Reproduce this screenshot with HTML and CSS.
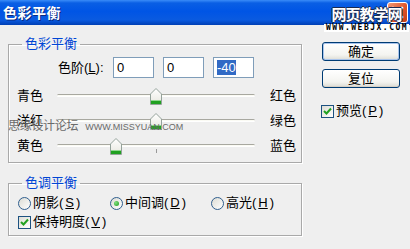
FILE: index.html
```html
<!DOCTYPE html>
<html lang="zh">
<head>
    <meta charset="UTF-8">
    <title>色彩平衡</title>
    <link rel="stylesheet" href="styles.css">
</head>
<body>
    <div class="titlebar">
        <span class="title">色彩平衡</span>
        <span class="close">
            <svg width="13" height="13" viewBox="0 0 13 13"><path d="M2 2 L11 11 M11 2 L2 11" stroke="#fff" stroke-width="2.4" stroke-linecap="square"/></svg>
        </span>
    </div>
    <div class="site-mark">
        <span class="site-name">网页教学网</span>
        <span class="site-url">WWW.WEBJX.COM</span>
    </div>

    <div class="main">
        <div class="left">
            <fieldset class="group">
                <legend>色彩平衡</legend>
                <div class="levels">
                    <span class="levels-label">色阶(<u>L</u>):</span>
                    <div class="field">0</div>
                    <div class="field">0</div>
                    <div class="field"><span class="selected">-40</span></div>
                </div>
                <div class="slider-row">
                    <span>青色</span>
                    <div class="track"><i class="tick"></i><span class="thumb" style="left: 99px"></span></div>
                    <span class="end">红色</span>
                </div>
                <div class="slider-row">
                    <span>洋红</span>
                    <div class="track"><i class="tick"></i><span class="thumb" style="left: 99px"></span></div>
                    <span class="end">绿色</span>
                </div>
                <div class="slider-row">
                    <span>黄色</span>
                    <div class="track"><i class="tick"></i><span class="thumb" style="left: 59px"></span></div>
                    <span class="end">蓝色</span>
                </div>
                <div class="forum-mark">思缘设计论坛 <small>WWW.MISSYUAN.COM</small></div>
            </fieldset>

            <fieldset class="group tone">
                <legend>色调平衡</legend>
                <div class="radios">
                    <label class="option"><span class="radio"></span>阴影(<u>S</u>)</label>
                    <label class="option"><span class="radio on"></span>中间调(<u>D</u>)</label>
                    <label class="option"><span class="radio"></span>高光(<u>H</u>)</label>
                </div>
                <label class="option keep"><span class="check"></span>保持明度(<u>V</u>)</label>
            </fieldset>
        </div>

        <div class="right">
            <button class="btn default">确定</button>
            <button class="btn">复位</button>
            <label class="option preview"><span class="check"></span>预览(<u>P</u>)</label>
        </div>
    </div>
</body>
</html>
```

FILE: styles.css
```css
body {
    margin: 0;
    background: #efefef;
    font-family: "Liberation Sans", "Noto Sans CJK SC", sans-serif;
    font-size: 13px;
    line-height: 16px;
    color: #000;
    width: 410px;
    height: 249px;
    overflow: hidden;
    position: relative;
}
.titlebar {
    height: 25px;
    display: flex;
    align-items: center;
    justify-content: space-between;
    padding: 0 2px 0 3px;
    background: linear-gradient(#3a8cf8 0, #0a5fe4 3px, #0055e5 45%, #0a5ae0 80%, #003fb4 100%);
}
.title {
    color: #fff;
    font-weight: bold;
    font-size: 14px;
    letter-spacing: 0.5px;
    text-shadow: 1px 1px 0 #0a2a80;
}
.close {
    width: 19px;
    height: 19px;
    border: 1px solid #fff;
    border-radius: 3px;
    background: linear-gradient(135deg, #f09a78, #e05a30 50%, #c43d16);
    display: flex;
    align-items: center;
    justify-content: center;
}
.site-mark {
    position: absolute;
    left: 324px;
    top: 6px;
    display: flex;
    flex-direction: column;
    align-items: center;
}
.site-name {
    font-size: 15px;
    line-height: 17px;
    font-weight: bold;
    color: #fff;
    letter-spacing: -1px;
    text-shadow: 1px 0 0 #1a2a50, -1px 0 0 #1a2a50, 0 1px 0 #1a2a50, 0 -1px 0 #1a2a50;
}
.site-url {
    margin-top: 1px;
    background: #fff;
    padding: 0 1px 0 2px;
    font-family: "DejaVu Sans Mono", monospace;
    font-size: 8px;
    line-height: 8px;
    font-weight: bold;
    letter-spacing: 1.5px;
}
.main {
    display: flex;
    padding: 11px 0 0 8px;
}
.left {
    width: 294px;
    flex-shrink: 0;
}
.group {
    margin: 0;
    padding: 5px 5px 4px 8px;
    border: 1px solid #a9a9a9;
    box-shadow: 1px 1px 0 #fff, inset 1px 1px 0 #fff;
    position: relative;
}
.group legend {
    color: #0046d5;
    padding: 0 3px;
    margin-left: 5px;
}
.levels {
    display: flex;
    align-items: center;
    gap: 9px;
    padding-left: 41px;
    height: 21px;
}
.levels-label {
    width: 50px;
    margin-right: -4px;
    white-space: nowrap;
}
.levels u, .option u {
    text-decoration: underline;
}
.field {
    border: 1px solid #7f9db9;
    background: #fff;
    padding-left: 3px;
    box-sizing: border-box;
    width: 41px;
    height: 21px;
    line-height: 19px;
}
.selected {
    background: #316ac5;
    color: #fff;
}
.slider-row {
    display: grid;
    grid-template-columns: 40px 198px auto;
    align-items: center;
    height: 25px;
    white-space: nowrap;
}
.levels + .slider-row {
    margin-top: 5px;
}
.end {
    margin-left: 15px;
}
.track {
    position: relative;
    width: 198px;
    height: 3px;
    border-top: 1px solid #a8a8a0;
    border-bottom: 1px solid #fff;
    background: #fbfbf4;
    border-radius: 2px;
    box-sizing: border-box;
}
.tick {
    position: absolute;
    left: 99px;
    top: 4px;
    width: 1px;
    height: 4px;
    background: #999;
}
.thumb {
    position: absolute;
    top: -7px;
    margin-left: -6px;
    width: 12px;
    height: 17px;
    background: url("data:image/svg+xml,%3Csvg xmlns='http://www.w3.org/2000/svg' width='12' height='17'%3E%3Cdefs%3E%3ClinearGradient id='g' x1='0' y1='0' x2='0' y2='1'%3E%3Cstop offset='0' stop-color='%23ffffff'/%3E%3Cstop offset='1' stop-color='%23e6e6de'/%3E%3C/linearGradient%3E%3C/defs%3E%3Cpath d='M0.5 6 L6 0.5 L11.5 6 L11.5 16.5 L0.5 16.5 Z' fill='url(%23g)' stroke='%2394a29a'/%3E%3Crect x='1' y='13' width='10' height='3' fill='%2321a121'/%3E%3Crect x='1' y='12' width='10' height='1' fill='%2390d890'/%3E%3C/svg%3E") no-repeat;
}
.forum-mark {
    position: absolute;
    left: -1px;
    top: 66px;
    color: #6a6a6a;
    font-size: 12px;
    letter-spacing: -0.3px;
}
.forum-mark small {
    font-size: 9px;
    margin-left: 4px;
    letter-spacing: 0;
}
.tone {
    margin-top: 12px;
    padding: 4px 5px 5px 8px;
}
.radios {
    display: grid;
    grid-template-columns: 92px 101px auto;
    height: 16px;
    padding-left: 1px;
}
.option {
    display: flex;
    align-items: center;
    gap: 2px;
    height: 16px;
    white-space: nowrap;
}
.keep {
    margin-top: 3px;
    padding-left: 1px;
}
.radio {
    width: 13px;
    height: 13px;
    box-sizing: border-box;
    border: 1px solid #2f5e8e;
    border-radius: 50%;
    background: linear-gradient(135deg, #dcdcd4, #fff);
    display: flex;
    align-items: center;
    justify-content: center;
}
.radio.on::after {
    content: "";
    width: 5px;
    height: 5px;
    border-radius: 50%;
    background: radial-gradient(circle at 35% 35%, #7fe07f, #1f9a1f);
}
.check {
    width: 13px;
    height: 13px;
    box-sizing: border-box;
    border: 1px solid #1c5180;
    background: url("data:image/svg+xml,%3Csvg xmlns='http://www.w3.org/2000/svg' width='11' height='11'%3E%3Cpath d='M2 5 L4.5 7.5 L9 2.5' fill='none' stroke='%2321a121' stroke-width='2'/%3E%3C/svg%3E") no-repeat center, linear-gradient(135deg, #dcdcd4, #fff);
}
.right {
    display: flex;
    flex-direction: column;
    align-items: flex-start;
    margin-left: 19px;
    padding-top: 6px;
}
.btn {
    width: 78px;
    height: 19px;
    margin-left: 1px;
    padding: 0;
    font: inherit;
    color: #000;
    border: 1px solid #003c74;
    border-radius: 3px;
    background: linear-gradient(#ffffff, #f4f4f0 70%, #dcdcd4);
    box-shadow: inset 0 -1px 0 #d6d0c5;
}
.btn.default {
    box-shadow: inset 0 0 0 1px #a9c4ec, inset 0 -1px 0 #6c8fd8;
}
.btn + .btn {
    margin-top: 8px;
}
.preview {
    margin-top: 15px;
}
```
